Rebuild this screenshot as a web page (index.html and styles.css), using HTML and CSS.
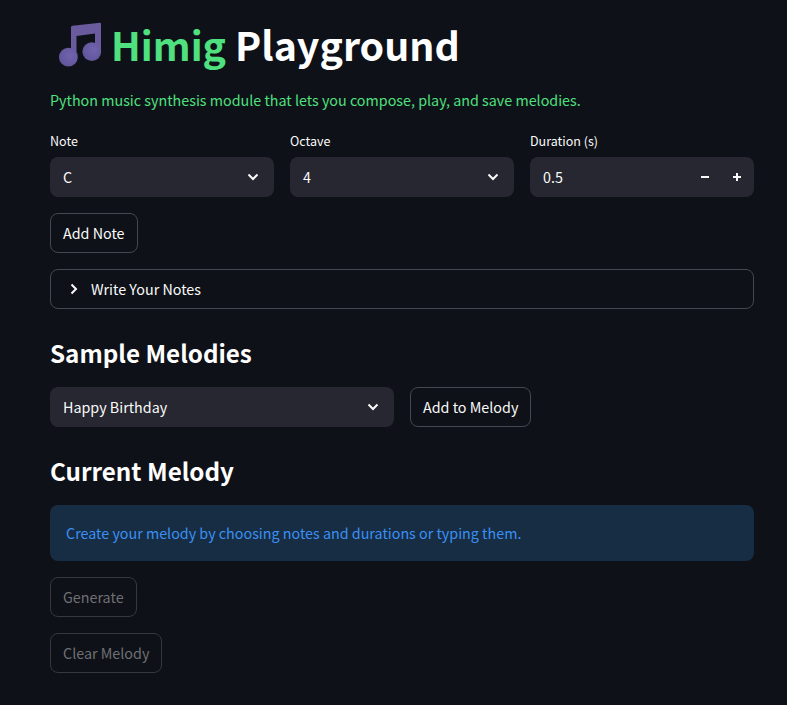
FILE: index.html
```
<!DOCTYPE html>
<html lang="en">
<head>
<meta charset="utf-8">
<title>Himig Playground</title>
<link rel="stylesheet" href="styles.css">
</head>
<body>
<main class="app">
  <h1 class="title">
    <svg class="logo" viewBox="0 0 44 46" width="44" height="46" aria-hidden="true">
      <defs>
        <radialGradient id="ball" cx="0.6" cy="0.4" r="0.7">
          <stop offset="0" stop-color="#7164ae"/>
          <stop offset="1" stop-color="#5f5399"/>
        </radialGradient>
      </defs>
      <path d="M13 5 Q13 4 14.5 3.8 L42 0.7 Q43 0.6 43 1.6 L43 30 L37 30 L37 11.5 L18.5 14 L18.5 36 L13 36 Z" fill="#695b9e"/>
      <circle cx="10.4" cy="35.2" r="9.4" fill="url(#ball)"/>
      <circle cx="33.8" cy="29.6" r="9.4" fill="url(#ball)"/>
    </svg>
    <span class="title-text"><span class="accent">Himig</span> Playground</span>
  </h1>
  <p class="tagline">Python music synthesis module that lets you compose, play, and save melodies.</p>

  <div class="fields">
    <div class="field">
      <span class="label">Note</span>
      <div class="control"><span class="value">C</span>
        <svg class="chev" viewBox="0 0 12 8" width="12" height="8"><path d="M1.5 1.5 L6 6 L10.5 1.5" /></svg>
      </div>
    </div>
    <div class="field">
      <span class="label">Octave</span>
      <div class="control"><span class="value">4</span>
        <svg class="chev" viewBox="0 0 12 8" width="12" height="8"><path d="M1.5 1.5 L6 6 L10.5 1.5" /></svg>
      </div>
    </div>
    <div class="field">
      <span class="label">Duration (s)</span>
      <div class="control control-number"><span class="value">0.5</span>
        <span class="steppers">
          <svg class="step" viewBox="0 0 10 10" width="10" height="10"><path d="M1 5 H9" /></svg>
          <svg class="step" viewBox="0 0 10 10" width="10" height="10"><path d="M1 5 H9 M5 1 V9" /></svg>
        </span>
      </div>
    </div>
  </div>

  <button class="btn add-note" type="button">Add Note</button>

  <div class="expander">
    <svg class="chev-right" viewBox="0 0 8 12" width="8" height="12"><path d="M1.5 1.5 L6 6 L1.5 10.5" /></svg>
    <span class="value">Write Your Notes</span>
  </div>

  <h2 class="heading sample-heading">Sample Melodies</h2>
  <div class="sample-row">
    <div class="control sample-select"><span class="value">Happy Birthday</span>
      <svg class="chev" viewBox="0 0 12 8" width="12" height="8"><path d="M1.5 1.5 L6 6 L10.5 1.5" /></svg>
    </div>
    <button class="btn" type="button">Add to Melody</button>
  </div>

  <h2 class="heading current-heading">Current Melody</h2>
  <div class="info">Create your melody by choosing notes and durations or typing them.</div>

  <button class="btn btn-disabled generate" type="button">Generate</button>
  <button class="btn btn-disabled clear" type="button">Clear Melody</button>
</main>
</body>
</html>
```
FILE: styles.css
```
* { box-sizing: border-box; }
html, body { margin: 0; padding: 0; height: 100%; }
body {
  background: #0e1117;
  color: #fafafa;
  font-family: "Noto Sans CJK SC", "Noto Sans", sans-serif;
  font-size: 14.32px;
  overflow: hidden;
}
.app {
  display: flex;
  flex-direction: column;
  align-items: flex-start;
  padding: 0 33px 0 50px;
}
.title {
  display: flex;
  align-items: flex-start;
  margin: 20px 0 0 8px;
  height: 48px;
  font-size: 39.35px;
  font-weight: 700;
  line-height: 48px;
  color: #fff;
}
.logo { flex: none; margin: 2px 9px 0 0; }
.accent { color: #4fe07f; }
.tagline {
  margin: 20px 0 0;
  height: 24px;
  line-height: 24px;
  font-size: 14.32px;
  color: #4fe07f;
}
.fields {
  display: grid;
  grid-template-columns: repeat(3, 1fr);
  gap: 16px;
  width: 100%;
  margin-top: 19px;
}
.field { display: flex; flex-direction: column; }
.label {
  height: 20px;
  line-height: 20px;
  font-size: 12.53px;
  margin-bottom: 6px;
}
.control {
  display: flex;
  align-items: center;
  justify-content: space-between;
  height: 40px;
  background: #262730;
  border-radius: 8px;
  padding: 0 15px 0 13px;
  font-size: 14.32px;
}
.value { margin-bottom: 2px; }
.control-number { padding-right: 12px; }
.chev { fill: none; stroke: #fafafa; stroke-width: 2; }
.steppers { display: flex; gap: 22px; }
.step { fill: none; stroke: #fafafa; stroke-width: 2; }
.btn {
  height: 40px;
  padding: 0 12px 2px;
  background: #0e1117;
  border: 1px solid #454850;
  border-radius: 8px;
  color: #fafafa;
  font-family: inherit;
  font-size: 14.32px;
}
.add-note { margin-top: 16px; }
.expander {
  display: flex;
  align-items: center;
  gap: 13px;
  width: 100%;
  height: 40px;
  margin-top: 16px;
  padding-left: 19px;
  border: 1px solid #454850;
  border-radius: 8px;
}
.chev-right { fill: none; stroke: #fafafa; stroke-width: 2; }
.heading {
  margin: 0;
  font-size: 24.2px;
  font-weight: 700;
  line-height: 40px;
  color: #fff;
}
.sample-heading { margin-top: 24px; }
.sample-row {
  display: flex;
  gap: 16px;
  width: 100%;
  margin-top: 14px;
}
.sample-select { width: 344px; }
.current-heading { margin-top: 24px; }
.info {
  width: 100%;
  height: 56px;
  margin-top: 14px;
  padding: 0 16px;
  line-height: 56px;
  border-radius: 8px;
  background: #172d43;
  color: #3b90f5;
}
.btn-disabled { color: #6f7075; border-color: #36383e; }
.generate { margin-top: 16px; }
.clear { margin-top: 16px; }
```
